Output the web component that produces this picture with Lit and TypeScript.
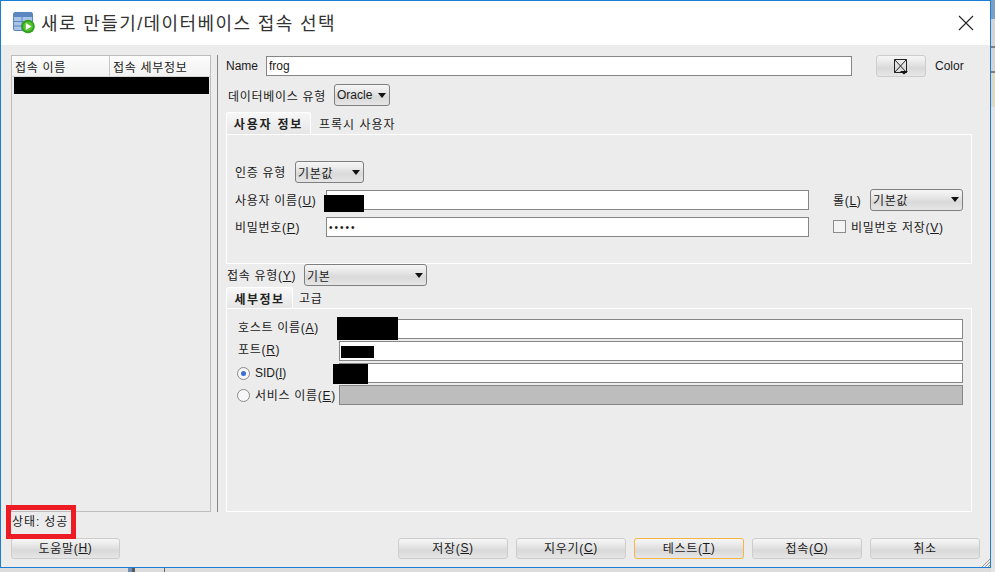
import { LitElement, html, css, svg } from "lit";
import { customElement } from "lit/decorators.js";

@customElement("app-root")
export class AppRoot extends LitElement {
  static styles = css`
    :host {
      display: block;
      position: relative;
      width: 995px;
      height: 572px;
      overflow: hidden;
      background: #dcdcdc;
      font-family: "Liberation Sans", "Noto Sans CJK KR", sans-serif;
      font-size: 12px;
      letter-spacing: 0.7px;
      color: #1a1a1a;
    }
    .latin {
      letter-spacing: 0;
    }
    .lift1 {
      margin-bottom: 2px;
    }
    .lift3 {
      margin-bottom: 6px;
    }
    .desk-right {
      position: absolute;
      left: 991px;
      top: 0;
      width: 4px;
      height: 572px;
      background: linear-gradient(
        #7f9fc0 0 19px,
        #d4d4d4 19px 46px,
        #808080 46px 48px,
        #d4d4d4 48px 71px,
        #808080 71px 73px,
        #ddd9c6 73px 107px,
        #e4e4e4 107px
      );
    }
    .desk-bottom {
      position: absolute;
      left: 128px;
      top: 568px;
      width: 7px;
      height: 4px;
      background: linear-gradient(90deg, #6f90b4 0 4px, #5a5a5a 4px);
    }
    .desk-line {
      position: absolute;
      left: 164px;
      top: 568px;
      width: 1px;
      height: 4px;
      background: #666;
    }
    .window {
      position: relative;
      box-sizing: border-box;
      width: 991px;
      height: 568px;
      border: 1px solid #1a7fd4;
      background: #ececec;
      display: flex;
      flex-direction: column;
    }
    .title {
      height: 44px;
      background: #fff;
      display: flex;
      align-items: center;
      padding-left: 12px;
      flex: none;
    }
    .title-text {
      margin-left: 6px;
      margin-bottom: 2px;
      font-size: 18px;
      color: #333;
      letter-spacing: 1.4px;
    }
    .close {
      margin-left: auto;
      margin-right: 16px;
      width: 16px;
      height: 16px;
    }
    .body {
      flex: 1;
      display: flex;
      flex-direction: column;
      padding: 10px 10px 0 10px;
      min-height: 0;
    }
    .main {
      display: flex;
      height: 457px;
      flex: none;
    }
    .list {
      box-sizing: border-box;
      width: 200px;
      border: 1px solid #bdbdbd;
      flex: none;
    }
    .list-head {
      display: flex;
      height: 20px;
      background: linear-gradient(#fdfdfd, #f1f1f1);
      border-bottom: 1px solid #d6d6d6;
    }
    .list-head span {
      display: flex;
      align-items: center;
      padding-left: 3px;
      box-sizing: border-box;
    }
    .list-head span:first-child {
      width: 98px;
      border-right: 1px solid #c8c8c8;
    }
    .list-row {
      height: 17px;
      margin-left: 2px;
      margin-right: 1px;
      background: #000;
    }
    .split {
      width: 1px;
      background: #858585;
      margin: 0 8px 0 6px;
      flex: none;
    }
    .right {
      width: 746px;
      display: flex;
      flex-direction: column;
      flex: none;
    }
    .row {
      display: flex;
      align-items: center;
    }
    .name-row {
      height: 20px;
      margin-top: 1px;
    }
    .name-label {
      width: 40px;
      flex: none;
    }
    .field {
      position: relative;
      box-sizing: border-box;
      height: 20px;
      border: 1px solid #868686;
      background: #fff;
      display: flex;
      align-items: center;
      padding-left: 2px;
      flex: none;
    }
    .field.off {
      background: #bdbdbd;
    }
    .field.w-name {
      width: 586px;
    }
    .field.w-user {
      width: 483px;
    }
    .field.w-conn {
      width: 624px;
    }
    .field.dots {
      font-size: 10px;
      letter-spacing: 2px;
    }
    .mask {
      position: absolute;
      background: #000;
    }
    .mask.user {
      left: -3px;
      top: 4px;
      width: 40px;
      height: 17px;
    }
    .mask.host {
      left: -3px;
      top: -3px;
      width: 61px;
      height: 23px;
    }
    .mask.port {
      left: 1px;
      top: 4px;
      width: 33px;
      height: 12px;
    }
    .mask.sid {
      left: -7px;
      top: 0;
      width: 35px;
      height: 20px;
    }
    .color-btn {
      margin-left: 24px;
      width: 50px;
      height: 22px;
      box-sizing: border-box;
      flex: none;
    }
    .btn,
    .combo {
      background: linear-gradient(#f6f6f6, #ececec 25%, #d9d9d9 60%, #e6e6e6);
      box-sizing: border-box;
      border-radius: 3px;
    }
    .btn {
      border: 1px solid #cdcdcd;
      display: flex;
      align-items: center;
      justify-content: center;
    }
    .btn.focus {
      border-color: #f5b544;
    }
    .color-text {
      margin-left: 9px;
    }
    .combo {
      border: 1px solid #7f7f7f;
      height: 22px;
      display: flex;
      align-items: center;
      padding: 0 3px 0 2px;
      flex: none;
      justify-content: space-between;
    }
    .combo.w-db {
      width: 56px;
    }
    .combo.w-auth {
      width: 69px;
    }
    .combo.w-role {
      width: 93px;
      margin-top: -1px;
    }
    .combo.w-type {
      width: 123px;
    }
    .arrow {
      width: 0;
      height: 0;
      border-left: 4.5px solid transparent;
      border-right: 4.5px solid transparent;
      border-top: 5px solid #111;
    }
    .db-row {
      margin-top: 8px;
      height: 22px;
    }
    .db-label {
      margin-left: 2px;
      width: 106px;
      flex: none;
    }
    .tabs {
      display: flex;
      align-items: flex-end;
      flex: none;
    }
    .tabs.user {
      height: 22px;
      margin-top: 6px;
    }
    .tabs.conn {
      height: 21px;
      margin-top: 1px;
    }
    .tab {
      box-sizing: border-box;
      height: 100%;
      border: 1px solid #fff;
      border-bottom: none;
      border-radius: 3px 3px 0 0;
      background: linear-gradient(#f7f7f7, #e6e6e6);
      display: flex;
      align-items: center;
      justify-content: center;
      font-weight: 700;
      color: #222;
    }
    .tab.t1 {
      width: 85px;
      letter-spacing: 1.8px;
    }
    .tab.t2 {
      width: 67px;
      letter-spacing: 1.4px;
    }
    .tab-off {
      align-self: center;
    }
    .t-a {
      margin-left: 8px;
      letter-spacing: 1px;
    }
    .t-b {
      margin-left: 6px;
    }
    .panel {
      box-sizing: border-box;
      border: 1px solid #fff;
      flex: none;
    }
    .panel.user {
      height: 130px;
      padding: 26px 0 0 8px;
    }
    .panel.conn {
      flex: 1;
      padding: 10px 0 0 11px;
    }
    .auth-row {
      height: 22px;
    }
    .auth-label {
      width: 60px;
      flex: none;
    }
    .u-row {
      height: 20px;
      margin-top: 7px;
    }
    .u-label {
      width: 91px;
      flex: none;
      white-space: nowrap;
    }
    .role-label {
      margin-left: 24px;
      width: 37px;
      flex: none;
    }
    .check {
      box-sizing: border-box;
      width: 13px;
      height: 13px;
      border: 1px solid #8c8c8c;
      background: #f4f4f4;
      margin-left: 24px;
      margin-right: 5px;
      flex: none;
    }
    .type-row {
      height: 22px;
      margin-left: 1px;
    }
    .type-label {
      width: 77px;
      flex: none;
      white-space: nowrap;
    }
    .c-row {
      height: 20px;
      margin-bottom: 2px;
    }
    .c-label {
      width: 101px;
      flex: none;
      white-space: nowrap;
    }
    .radio {
      box-sizing: border-box;
      width: 13px;
      height: 13px;
      border-radius: 50%;
      border: 1px solid #8a8a8a;
      background: #f7f7f7;
      display: flex;
      align-items: center;
      justify-content: center;
      flex: none;
      margin-left: -1px;
      margin-right: 5px;
    }
    .radio i {
      width: 5px;
      height: 5px;
      border-radius: 50%;
      background: #3a6fd0;
    }
    .r-label {
      width: 84px;
      flex: none;
      white-space: nowrap;
    }
    .status {
      position: relative;
      height: 26px;
      flex: none;
      display: flex;
      align-items: center;
      padding: 0 0 0 1px;
    }
    .status span {
      margin-top: -9px;
      letter-spacing: 0.9px;
    }
    .redbox {
      position: absolute;
      left: -5px;
      top: -7px;
      width: 70px;
      height: 34px;
      box-sizing: border-box;
      border: 5px solid #ed1c24;
    }
    .actions {
      display: flex;
      height: 21px;
      flex: none;
    }
    .actions .btn {
      width: 110px;
      height: 21px;
      margin-right: 8px;
      flex: none;
      padding-bottom: 2px;
    }
    .actions .btn:last-child {
      margin-right: 0;
    }
    .actions .help {
      width: 109px;
      margin-right: 278px;
    }
    .grip {
      position: absolute;
      right: 0;
      bottom: 0;
      width: 9px;
      height: 9px;
    }
    u {
      text-underline-offset: 1px;
    }
  `;

  render() {
    return html`
      <div class="desk-right"></div>
      <div class="desk-bottom"></div>
      <div class="desk-line"></div>
      <div class="window">
        <div class="title">
          <svg width="22" height="22" viewBox="0 0 22 22">
            <rect x="0.5" y="0.5" width="19" height="18" rx="1.5" fill="#a9c4e6" stroke="#5b86c0" />
            <rect x="1" y="1" width="18" height="4" fill="#5b86c0" />
            <path d="M1 9.5h18M1 14h18M9 5v14" stroke="#5b86c0" fill="none" />
            <circle cx="15" cy="14.5" r="6.8" fill="#2f9e1f" />
            <circle cx="15" cy="14.5" r="5" fill="#55c22f" />
            <path d="M12.8 11l5.7 3.5-5.7 3.5z" fill="#fff" />
          </svg>
          <span class="title-text">새로 만들기/데이터베이스 접속 선택</span>
          <svg class="close" viewBox="0 0 16 16">
            <path d="M1 1l14 14M15 1L1 15" stroke="#222" stroke-width="1.1" fill="none" />
          </svg>
        </div>
        <div class="body">
          <div class="main">
            <div class="list">
              <div class="list-head"><span>접속 이름</span><span>접속 세부정보</span></div>
              <div class="list-row"></div>
            </div>
            <div class="split"></div>
            <div class="right">
              <div class="row name-row">
                <span class="name-label latin">Name</span>
                <div class="field w-name latin">frog</div>
                <div class="btn color-btn">
                  <svg width="16" height="17" viewBox="0 0 16 17">
                    <path d="M1.5 1.5h12v13h-12zM1.5 1.5l12 13M13.5 1.5l-12 13" stroke="#222" fill="none" />
                    <path d="M7 13h8l-4 3.5z" fill="#111" />
                  </svg>
                </div>
                <span class="color-text latin">Color</span>
              </div>
              <div class="row db-row">
                <span class="db-label">데이터베이스 유형</span>
                <div class="combo w-db latin">Oracle<span class="arrow"></span></div>
              </div>
              <div class="tabs user">
                <div class="tab t1">사용자 정보</div>
                <span class="tab-off t-a">프록시 사용자</span>
              </div>
              <div class="panel user">
                <div class="row auth-row">
                  <span class="auth-label lift1">인증 유형</span>
                  <div class="combo w-auth">기본값<span class="arrow"></span></div>
                </div>
                <div class="row u-row">
                  <span class="u-label lift1">사용자 이름(<u>U</u>)</span>
                  <div class="field w-user">
                    <span class="mask user"></span>
                  </div>
                  <span class="role-label lift1">롤(<u>L</u>)</span>
                  <div class="combo w-role">기본값<span class="arrow"></span></div>
                </div>
                <div class="row u-row">
                  <span class="u-label lift1">비밀번호(<u>P</u>)</span>
                  <div class="field w-user dots">•••••</div>
                  <span class="check lift1"></span>
                  <span class="lift1">비밀번호 저장(<u>V</u>)</span>
                </div>
              </div>
              <div class="row type-row">
                <span class="type-label lift1">접속 유형(<u>Y</u>)</span>
                <div class="combo w-type">기본<span class="arrow"></span></div>
              </div>
              <div class="tabs conn">
                <div class="tab t2">세부정보</div>
                <span class="tab-off t-b">고급</span>
              </div>
              <div class="panel conn">
                <div class="row c-row">
                  <span class="c-label lift3">호스트 이름(<u>A</u>)</span>
                  <div class="field w-conn">
                    <span class="mask host"></span>
                  </div>
                </div>
                <div class="row c-row">
                  <span class="c-label lift3">포트(<u>R</u>)</span>
                  <div class="field w-conn">
                    <span class="mask port"></span>
                  </div>
                </div>
                <div class="row c-row">
                  <span class="radio"><i></i></span>
                  <span class="r-label latin">SID(<u>I</u>)</span>
                  <div class="field w-conn">
                    <span class="mask sid"></span>
                  </div>
                </div>
                <div class="row c-row">
                  <span class="radio"></span>
                  <span class="r-label lift1">서비스 이름(<u>E</u>)</span>
                  <div class="field off w-conn"></div>
                </div>
              </div>
            </div>
          </div>
          <div class="status">
            <span>상태: 성공</span>
            <div class="redbox"></div>
          </div>
          <div class="actions">
            <div class="btn help">도움말(<u>H</u>)</div>
            <div class="btn">저장(<u>S</u>)</div>
            <div class="btn">지우기(<u>C</u>)</div>
            <div class="btn focus">테스트(<u>T</u>)</div>
            <div class="btn">접속(<u>O</u>)</div>
            <div class="btn">취소</div>
          </div>
        </div>
        <svg class="grip" viewBox="0 0 9 9">
          ${svg`<path d="M9 1L1 9M9 4L4 9M9 7L7 9" stroke="#9a9a9a" fill="none" />`}
        </svg>
      </div>
    `;
  }
}
